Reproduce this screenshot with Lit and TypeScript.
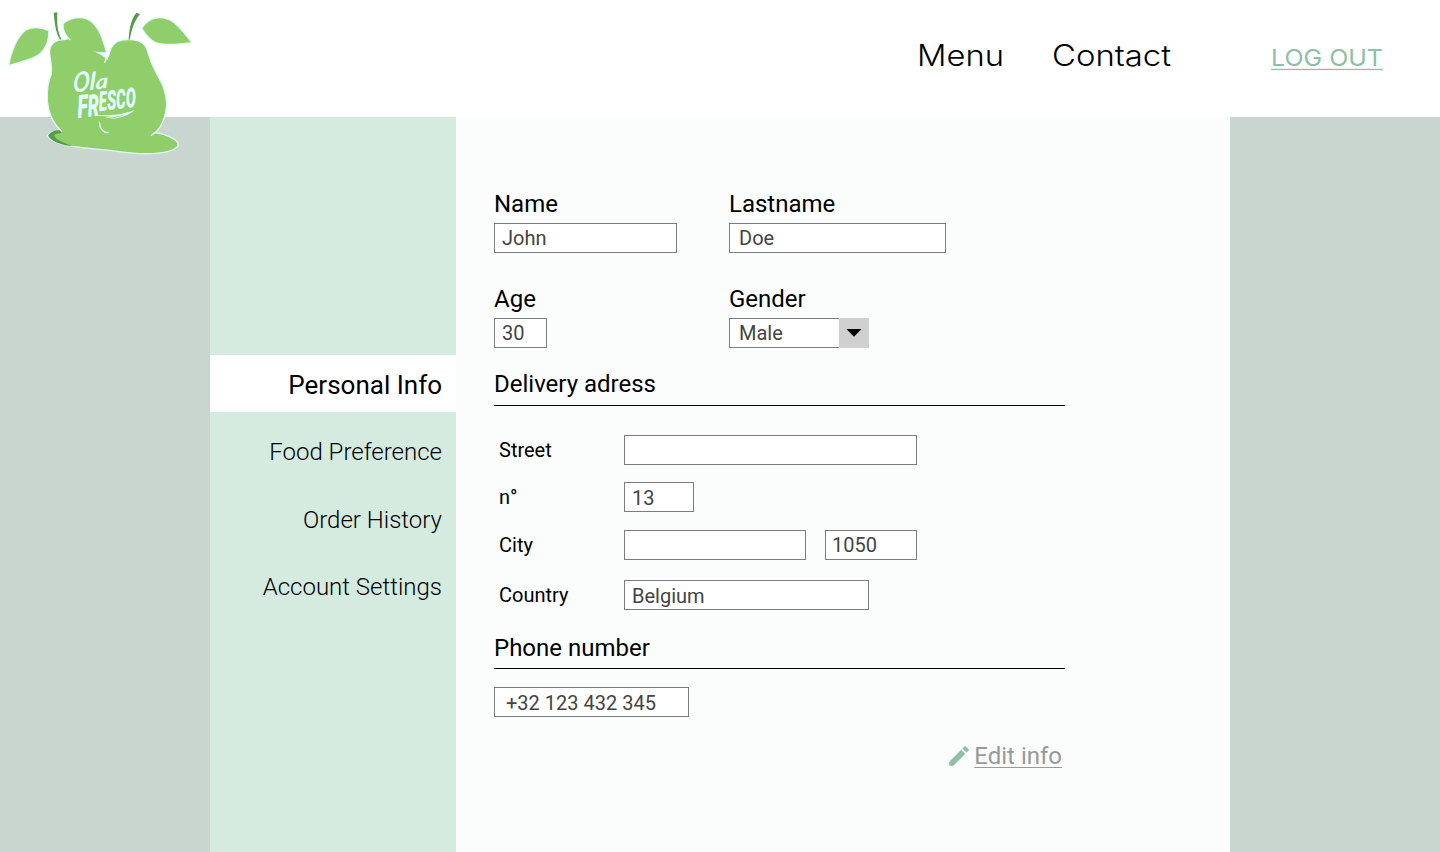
import { LitElement, html, css, svg } from "lit";
import { customElement, property } from "lit/decorators.js";

@customElement("fresco-logo")
class FrescoLogo extends LitElement {
  static styles = css`
    :host { display: block; width: 200px; height: 165px; }
    .art { display: block; }
    .pale { stroke: #e2fbf6; stroke-width: 4; stroke-linejoin: round; stroke-linecap: round; }
    .green { fill: #8fce6b; }
    .dark { fill: #559d4b; }
    .line { fill: none; }
    .word { fill: #e2fffb; stroke: #e2fffb; }
    .script { font-family: "Lato", cursive; font-style: italic; font-weight: 700; stroke-width: 0; }
    .block { font-family: "Roboto", sans-serif; font-style: italic; font-weight: 900; stroke-width: 0; }
    .swash { fill: #e2fffb; }
  `;
  render() {
    return html`<svg class="art" width="200" height="165" viewBox="0 0 600 495" aria-label="Ola Fresco">
      <path class="green pale" d="M186 397C172 390 154 393 142 406C150 424 180 434 222 440C268 446 310 449 352 454C405 462 467 464 506 454C528 448 538 438 534 429C523 412 499 404 467 398Z"></path>
      <path class="dark" d="M184 391C166 389 151 395 144 407C158 428 190 436 218 438C190 427 164 419 163 405C168 400 178 400 190 401Z"></path>
      <path class="green pale" d="M182 119C155 125 147 142 149 162C152 185 156 197 154 222C140 250 141 280 142 305C145 337 160 372 187 397C260 424 380 424 454 406C480 393 500 350 500 310C499 271 483 244 467 215C452 187 448 173 442 152C436 130 418 119 390 119C362 117 342 126 333 145C327 160 326 175 314 186L318 174L277 153L318 158L290 118L212 120Z"></path>
      <path class="green" d="M188 395L195 380L445 380L453 403L466 404L470 430L240 432L186 408L180 401Z"></path>
      <path class="green" d="M185 124L210 116L314 158L328 210L240 230L180 180Z"></path>
      <path class="green pale" d="M26 197C31 160 51 108 78 90C99 79 126 82 147 92C147 120 139 143 123 158C101 180 65 183 26 197Z"></path>
      <path class="green" d="M189 70C219 49 254 46 278 68C301 90 311 124 320 158L300 190L220 180L208 118C195 103 188 88 189 70Z"></path>
      <path class="swash" d="M277 152C292 157 306 156 321 157L319 177C312 169 297 160 277 152Z"></path>
      <path class="line pale" d="M210 119C195 105 187 88 189 70C219 49 254 46 278 68C301 90 311 124 320 158M319 175L314 187"></path>
      <path class="line pale" stroke-width="2" d="M146 92C155 91 160 86 165 82M171 57C181 58 187 63 190 70M406 80C415 77 422 80 426 84"></path>
      <path class="dark" d="M161 38L172 37C170 70 173 96 184 118L180 119C166 95 164 68 161 38Z"></path>
      <path class="green pale" d="M425 84C447 52 474 47 503 57C531 69 553 99 576 128C541 132 500 139 470 129C449 121 436 104 425 84Z"></path>
      <path class="dark" d="M409 38L420 42C402 65 396 86 389 119L386 119C388 84 393 58 409 38Z"></path>
      <path class="line pale" d="M298 367C300 386 310 398 326 398M454 406C460 401 465 396 468 397"></path>
      <g transform="translate(219 278) rotate(-8) skewX(-10)">
        <text class="word script" x="0" y="0"><tspan font-size="82" textLength="50" lengthAdjust="spacingAndGlyphs">O</tspan><tspan font-size="72" textLength="18" lengthAdjust="spacingAndGlyphs">l</tspan><tspan font-size="60" textLength="38" lengthAdjust="spacingAndGlyphs">a</tspan></text>
      </g>
      <g transform="translate(234 355) rotate(-7) skewX(-4)">
        <text class="word block" x="0" y="0"><tspan font-size="96" textLength="31" lengthAdjust="spacingAndGlyphs">F</tspan><tspan font-size="92" textLength="34" lengthAdjust="spacingAndGlyphs">R</tspan><tspan font-size="82" dy="-13" textLength="112" lengthAdjust="spacingAndGlyphs">ESCO</tspan></text>
      </g>
      <path class="swash" d="M274 344C314 347 354 348 404 330C391 344 360 356 330 357C346 352 364 350 372 344C348 351 324 355 314 353L336 349C312 350 293 347 274 344Z"></path>
    </svg>`;
  }
}

@customElement("nav-word")
class NavWord extends LitElement {
  @property() label = "";
  @property({ type: Number }) size = 30;
  @property({ type: Number }) length = 80;
  @property({ type: Boolean, reflect: true }) underlined = false;
  static styles = css`
    :host { display: block; height: 44px; }
    .word { display: block; overflow: visible; fill: currentColor; font-family: "Inter", sans-serif; font-weight: 350; }
    :host([underlined]) .word { font-weight: 400; }
    .rule { fill: currentColor; }
  `;
  render() {
    return html`<svg class="word" width=${this.length} height="44">
      <text x="0" y="32.4" font-size=${this.size} textLength=${this.length} lengthAdjust="spacingAndGlyphs">${this.label}</text>
      ${this.underlined ? svg`<rect class="rule" x="0" y="34.8" width=${this.length} height="1.3"></rect>` : ""}
    </svg>`;
  }
}

@customElement("app-root")
class AppRoot extends LitElement {
  static styles = css`
    :host { display: block; height: 852px; font-family: "Roboto", sans-serif; color: #000; overflow: hidden; position: relative; }
    * { box-sizing: border-box; }
    .header { height: 117px; background: #fff; display: flex; justify-content: flex-end; padding: 34px 57px 0 0; }
    .logo { position: absolute; left: 0; top: 0; z-index: 1; }
    .contact { margin-left: 48px; }
    .logout { margin-left: 100px; color: #8dc0a6; }
    .body { height: 735px; background: #c8d6cf; display: flex; padding: 0 210px; }
    .side { width: 246px; background: #d6ebe0; padding-top: 238px; text-align: right; }
    .item { height: 67.5px; line-height: 67.5px; padding-right: 14px; font-size: 24px; font-weight: 300; }
    .item.active { height: 57px; line-height: 60px; background: #fff; font-size: 26px; font-weight: 400; margin-bottom: 7px; }
    .main { flex: 1; background: #fbfdfc; padding: 73px 165px 0 38px; }
    .pair { display: grid; grid-template-columns: 235px 1fr; margin-bottom: 32px; }
    .pair.second { margin-bottom: 22px; }
    .label { display: block; font-size: 24px; line-height: 28px; margin-bottom: 5px; }
    .box { display: block; height: 30px; border: 1px solid #7d7d7d; border-radius: 0; background: #fff; color: #444; font: 400 20px/28px "Roboto", sans-serif; padding: 0 0 0 7px; margin: 0; outline: none; }
    .box.wide { padding-left: 9px; }
    .box.low { padding-top: 2px; }
    .box.phone { padding-left: 11px; }
    .box.zip { padding-left: 6px; margin-left: 19px; }
    .w183 { width: 183px; } .w217 { width: 217px; } .w53 { width: 53px; } .w293 { width: 293px; }
    .w70 { width: 70px; } .w182 { width: 182px; } .w92 { width: 92px; } .w245 { width: 245px; } .w195 { width: 195px; }
    .select { display: flex; width: 140px; }
    .select .box { width: 110px; border-right: 0; }
    .arrow { width: 30px; height: 30px; background: #d0d0d0; display: block; }
    .heading { font-size: 24px; line-height: 28px; font-weight: 400; margin: 0; border-bottom: 1px solid #000; height: 36px; }
    .address { padding: 29px 0 24px 5px; }
    .row { display: grid; grid-template-columns: 125px auto auto; justify-content: start; align-items: center; font-size: 20px; height: 30px; }
    .row.number { margin: 17px 0 18px; }
    .row.country { margin-top: 20px; }
    .heading.tel { height: 35px; margin-bottom: 18px; }
    .edit { display: flex; justify-content: flex-end; margin-top: 25px; padding-right: 3px; color: #999; font-size: 24px; line-height: 28px; }
    .pencil { width: 26px; height: 26px; margin: 1px 2.5px 0 0; fill: #8dc0a6; }
    .link { text-decoration: underline; text-decoration-thickness: 1.4px; text-underline-offset: 3px; text-decoration-skip-ink: none; }
  `;
  private box(cls: string, value: string, name: string) {
    return html`<input class="box ${cls}" .value=${value} aria-label=${name} />`;
  }
  render() {
    return html`
      <fresco-logo class="logo"></fresco-logo>
      <header class="header">
        <nav-word label="Menu" size="29.5" length="87"></nav-word>
        <nav-word class="contact" label="Contact" size="29.5" length="119"></nav-word>
        <nav-word class="logout" label="LOG OUT" size="23.5" length="112" underlined></nav-word>
      </header>
      <div class="body">
        <nav class="side">
          <div class="item active">Personal Info</div>
          <div class="item">Food Preference</div>
          <div class="item">Order History</div>
          <div class="item">Account Settings</div>
        </nav>
        <main class="main">
          <div class="pair">
            <div><span class="label">Name</span>${this.box("w183", "John", "Name")}</div>
            <div><span class="label">Lastname</span>${this.box("w217 wide", "Doe", "Lastname")}</div>
          </div>
          <div class="pair second">
            <div><span class="label">Age</span>${this.box("w53", "30", "Age")}</div>
            <div><span class="label">Gender</span>
              <div class="select">${this.box("wide", "Male", "Gender")}
                <svg class="arrow" viewBox="0 0 30 30"><path d="M7.3 11H22.5L15 18.8Z"></path></svg>
              </div>
            </div>
          </div>
          <h2 class="heading">Delivery adress</h2>
          <div class="address">
            <div class="row"><span>Street</span>${this.box("w293", "", "Street")}</div>
            <div class="row number"><span>n°</span>${this.box("w70 low", "13", "Number")}</div>
            <div class="row"><span>City</span>${this.box("w182", "", "City")}${this.box("w92 zip", "1050", "Postal code")}</div>
            <div class="row country"><span>Country</span>${this.box("w245 low", "Belgium", "Country")}</div>
          </div>
          <h2 class="heading tel">Phone number</h2>
          ${this.box("w195 low phone", "+32 123 432 345", "Phone number")}
          <div class="edit">
            <svg class="pencil" viewBox="0 0 24 24"><path d="M3 17.25V21h3.75L17.81 9.94l-3.75-3.75L3 17.25zM20.71 7.04c.39-.39.39-1.02 0-1.41l-2.34-2.34c-.39-.39-1.02-.39-1.41 0l-1.83 1.83 3.75 3.75 1.83-1.83z"></path></svg>
            <span class="link">Edit info</span>
          </div>
        </main>
      </div>`;
  }
}
